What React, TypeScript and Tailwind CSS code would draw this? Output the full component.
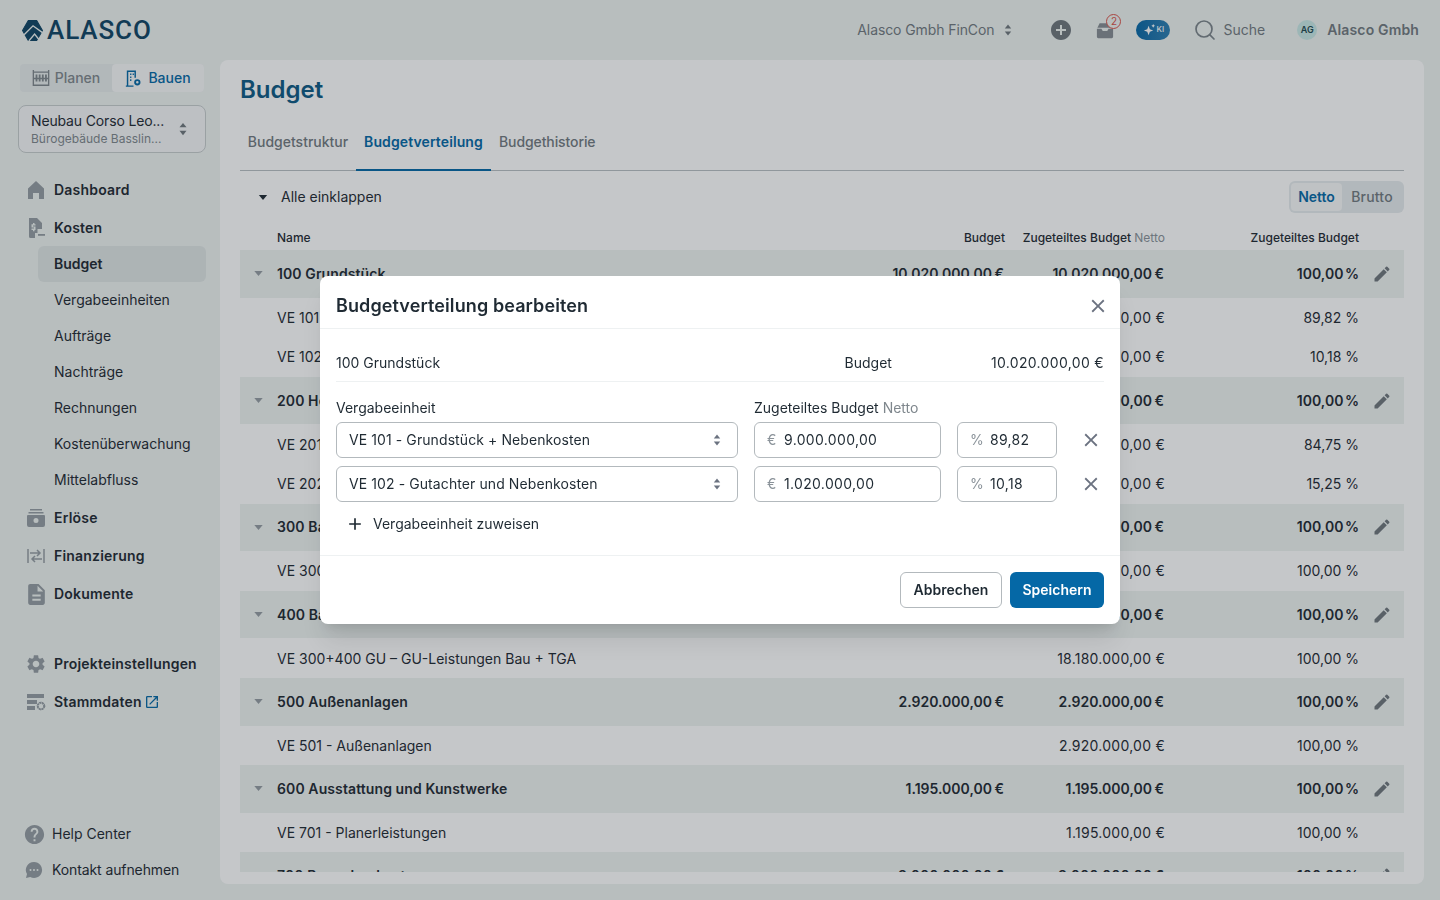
import React from "react";
import { Search } from "lucide-react";
import { MdAdd, MdAddCircle, MdClose, MdDescription, MdEdit, MdHelp, MdOpenInNew, MdSettings } from "react-icons/md";

type Row = {
  name: string;
  budget?: string;
  assigned: string;
  percent: string;
  group?: boolean;
};

const rows: Row[] = [
  { name: "100 Grundstück", budget: "10.020.000,00 €", assigned: "10.020.000,00 €", percent: "100,00 %", group: true },
  { name: "VE 101 - Grundstück + Nebenkosten", assigned: "9.000.000,00 €", percent: "89,82 %" },
  { name: "VE 102 - Gutachter und Nebenkosten", assigned: "1.020.000,00 €", percent: "10,18 %" },
  { name: "200 Herrichten und Erschließen", budget: "1.180.000,00 €", assigned: "1.180.000,00 €", percent: "100,00 %", group: true },
  { name: "VE 201 - Herrichten", assigned: "1.000.000,00 €", percent: "84,75 %" },
  { name: "VE 202 - Erschließung", assigned: "180.000,00 €", percent: "15,25 %" },
  { name: "300 Bauwerk", budget: "14.000.000,00 €", assigned: "14.000.000,00 €", percent: "100,00 %", group: true },
  { name: "VE 300+400 GU", assigned: "14.000.000,00 €", percent: "100,00 %" },
  { name: "400 Bauwerk TGA", budget: "4.180.000,00 €", assigned: "4.180.000,00 €", percent: "100,00 %", group: true },
  { name: "VE 300+400 GU – GU-Leistungen Bau + TGA", assigned: "18.180.000,00 €", percent: "100,00 %" },
  { name: "500 Außenanlagen", budget: "2.920.000,00 €", assigned: "2.920.000,00 €", percent: "100,00 %", group: true },
  { name: "VE 501 - Außenanlagen", assigned: "2.920.000,00 €", percent: "100,00 %" },
  { name: "600 Ausstattung und Kunstwerke", budget: "1.195.000,00 €", assigned: "1.195.000,00 €", percent: "100,00 %", group: true },
  { name: "VE 701 - Planerleistungen", assigned: "1.195.000,00 €", percent: "100,00 %" },
  { name: "700 Baunebenkosten", budget: "3.000.000,00 €", assigned: "3.000.000,00 €", percent: "100,00 %", group: true },
];

const subNav = ["Vergabeeinheiten", "Aufträge", "Nachträge", "Rechnungen", "Kostenüberwachung", "Mittelabfluss"];

const UpDown = ({ className }: { className: string }) => (
  <svg viewBox="0 0 10 16" className={className} fill="currentColor">
    <path d="M5 1 9 6H1Z" />
    <path d="M5 15 1 10h8Z" />
  </svg>
);

const Caret = ({ className }: { className: string }) => (
  <svg viewBox="0 0 10 6" className={className} fill="currentColor">
    <path d="M0 0h10L5 6Z" />
  </svg>
);

const Logo = () => (
  <svg viewBox="0 0 20 20" className="h-[21px] w-[21px]">
    <path d="M6 .5h8l5.500 9.500-5.500 9.500H6L.5 10Z" fill="#0f4565" stroke="#0f4565" strokeLinejoin="round" />
    <path d="M2 14 10.500 5.500l9 6.500M6.500 20l5.500-6.500 4.500 5.500" fill="none" stroke="#eef3f1" strokeWidth="1.300" />
  </svg>
);

const HomeIcon = () => (
  <svg viewBox="0 0 20 20" className="h-5 w-5" fill="currentColor">
    <path d="M10 1 18 8.500V19h-5v-6H7v6H2V8.500Z" />
  </svg>
);

const CostIcon = () => (
  <svg viewBox="0 0 20 20" className="h-5 w-5" fill="currentColor">
    <path d="M3 0h8l5 5v6h-4.500v4H15v0H9v5H4.500A1.500 1.500 0 0 1 3 18.500Z" />
    <path d="M12 16h7v1.800h-7Z" />
    <path d="M7 5v1.200H5.500v3.300H8v1H5.500V12H7v1.200h1.500V12h1V8.500H7v-1h2.500V6.200h-1V5Z" fill="#eef3f1" />
  </svg>
);

const RevenueIcon = () => (
  <svg viewBox="0 0 20 20" className="h-5 w-5" fill="currentColor">
    <path d="M4 1h12v1.500H4ZM2.500 4h15v1.500h-15Z" />
    <path fillRule="evenodd" d="M2 7h16a1 1 0 0 1 1 1v9a2 2 0 0 1-2 2H3a2 2 0 0 1-2-2V8a1 1 0 0 1 1-1Zm8 3a2.500 2.500 0 1 0 0 5 2.500 2.500 0 0 0 0-5Z" />
  </svg>
);

const FinanceIcon = () => (
  <svg viewBox="0 0 20 20" className="h-5 w-5" fill="none" stroke="currentColor" strokeWidth="1.500">
    <path d="M2 3v14M18 3v14M4 7h10M11 4l3 3-3 3M16 13H6M9 10l-3 3 3 3" />
  </svg>
);

const DataIcon = () => (
  <svg viewBox="0 0 20 20" className="h-5 w-5" fill="currentColor">
    <path d="M1 2h17v4H1ZM1 8h10v4H1ZM1 14h8v4H1Z" />
    <circle cx="15" cy="14" r="3.200" fill="none" stroke="currentColor" strokeWidth="2" strokeDasharray="2 .6" />
    <circle cx="15" cy="14" r="3.800" fill="none" stroke="currentColor" strokeWidth="1" strokeDasharray="1.500 1.500" />
  </svg>
);

const ChatIcon = () => (
  <svg viewBox="0 0 20 20" className="h-5 w-5" fill="currentColor">
    <path fillRule="evenodd" d="M10 2a8 8 0 1 1-3.800 15L2 18l1-3.900A8 8 0 0 1 10 2ZM6.500 9a1 1 0 1 0 0 2 1 1 0 0 0 0-2Zm3.500 0a1 1 0 1 0 0 2 1 1 0 0 0 0-2Zm3.500 0a1 1 0 1 0 0 2 1 1 0 0 0 0-2Z" />
  </svg>
);

const AbacusIcon = () => (
  <svg viewBox="0 0 20 20" className="h-[18px] w-[18px]" fill="none" stroke="currentColor" strokeWidth="1.500">
    <path d="M1.500 1v18M18.500 1v18M1.500 3.500h17M1.500 18h17M1.500 10.500h17" />
    <path d="M5 6v8M8.500 6v8M12 6v8M15.500 6v8" strokeWidth="2" />
  </svg>
);

const BuildingIcon = () => (
  <svg viewBox="0 0 20 20" className="h-[17px] w-[17px]" fill="none" stroke="currentColor" strokeWidth="1.700">
    <path d="M1 19h9M3 19V1.500h9V9" />
    <path d="M6 5h1.500M9 5h1.500M6 8.500h1.500M6 12h1.500" strokeWidth="2" />
    <circle cx="14.500" cy="14.500" r="2.600" strokeWidth="2.200" />
  </svg>
);

const InboxIcon = () => (
  <svg viewBox="0 0 20 18" className="h-[17px] w-[18px]" fill="currentColor">
    <path d="M4 1h9l3 5H1.500Z" />
    <path d="M1 7h5l1.500 2.500h5L14 7h5v9a1.500 1.500 0 0 1-1.500 1.500h-15A1.500 1.500 0 0 1 1 16Z" />
  </svg>
);

const Spark = () => (
  <svg viewBox="0 0 14 14" className="h-[13px] w-[13px]" fill="white">
    <path d="M6 2 7.400 5.600 11 7 7.400 8.400 6 12 4.600 8.400 1 7 4.600 5.600Z" />
    <path d="M11 0l.7 1.300L13 2l-1.300.7L11 4l-.7-1.300L9 2l1.300-.7Z" />
  </svg>
);

const NavItem = ({ icon, label, extra }: { icon: React.ReactNode; label: string; extra?: React.ReactNode }) => (
  <div className="flex h-9 items-center gap-2 pl-[26px] text-sm font-semibold tracking-[0.2px] text-[#1f2a33]">
    <span className="flex w-5 shrink-0 justify-center text-[#959da3]">{icon}</span>
    <span>{label}</span>
    {extra}
  </div>
);

const TableRow = ({ row }: { row: Row }) => (
  <div
    className={
      row.group
        ? "grid h-[47.6px] shrink-0 grid-cols-[37px_1fr_200px_160px_194px_45px] items-center bg-[#eef3f1] text-sm font-semibold text-[#1f2a33]"
        : "grid h-[39.6px] shrink-0 grid-cols-[37px_1fr_200px_160px_194px_45px] items-center pt-[1px] text-sm text-[#1f2a33]"
    }
  >
    <span className="flex justify-center text-[#959da3]">{row.group && <Caret className="h-[5px] w-[9px]" />}</span>
    <span className={row.group ? "truncate tracking-[0.1px]" : "truncate"}>{row.name}</span>
    <span className="pr-[1px] text-right [word-spacing:-1px]">{row.budget}</span>
    {row.group ? (
      <span className="pr-[1px] text-right [word-spacing:-1px]">{row.assigned}</span>
    ) : (
      <span className="text-right tracking-[0.25px]">{row.assigned}</span>
    )}
    {row.group ? (
      <span className="text-right [word-spacing:-2px]">{row.percent}</span>
    ) : (
      <span className="text-right">{row.percent}</span>
    )}
    <span className="flex justify-center pl-[1px] text-[#6f777d]">{row.group && <MdEdit className="h-[20px] w-[20px]" />}</span>
  </div>
);

const AssignRow = ({ unit, amount, percent }: { unit: string; amount: string; percent: string }) => (
  <div className="flex h-9 items-center text-sm">
    <div className="flex h-9 w-[402px] items-center justify-between rounded-md border border-[#b3b9bd] pl-3 pr-4 text-[#1f2a33]">
      <span className="tracking-[0.09px]">{unit}</span>
      <UpDown className="h-[14px] w-2 text-[#6b7280]" />
    </div>
    <div className="ml-4 flex h-9 w-[187px] items-center rounded-md border border-[#b3b9bd] pl-3 text-[#1f2a33]">
      <span className="w-[17px] text-[#8a9299]">€</span>
      <span className="tracking-[0.33px]">{amount}</span>
    </div>
    <div className="ml-4 flex h-9 w-[100px] items-center rounded-md border border-[#b3b9bd] pl-3 text-[#1f2a33]">
      <span className="w-5 text-[#8a9299]">%</span>
      <span className="tracking-[0.3px]">{percent}</span>
    </div>
    <MdClose className="ml-[23px] h-[22px] w-[22px] text-[#6b7280]" />
  </div>
);

export default function App() {
  return (
    <div className="flex h-screen w-full flex-col overflow-hidden bg-[#eef3f1] [font-family:Inter,sans-serif]">
      {/* top bar */}
      <header className="flex h-[60px] shrink-0 items-center pl-[22px] pr-[21px]">
        <Logo />
        <span className="ml-[4px] text-[26px] font-medium leading-none tracking-[0.9px] text-[#0f4565] [font-family:Roboto,sans-serif]">ALASCO</span>
        <div className="flex-1" />
        <span className="text-sm tracking-[-0.1px] text-[#727a80]">Alasco Gmbh FinCon</span>
        <UpDown className="ml-[10px] h-[14px] w-2 text-[#6f777d]" />
        <MdAddCircle className="ml-[37px] h-6 w-6 text-[#6f777d]" />
        <div className="relative ml-[23px] text-[#868d93]">
          <InboxIcon />
          <span className="absolute -right-[7px] -top-[8px] flex h-[15px] w-[15px] items-center justify-center rounded-full border border-[#d9534a] bg-[#eef3f1] text-[10px] leading-none text-[#d9534a]">2</span>
        </div>
        <div className="ml-[22px] flex h-5 w-[34px] items-center justify-center gap-[1px] rounded-full bg-gradient-to-r from-[#0568a6] to-[#2c7fb3]">
          <Spark />
          <span className="-mt-[3px] text-[8px] font-medium text-white">KI</span>
        </div>
        <Search className="ml-[23px] h-[24px] w-[24px] text-[#7b848a]" strokeWidth={1.7} />
        <span className="ml-[6px] text-sm text-[#727a80]">Suche</span>
        <span className="ml-[32px] flex h-[20px] w-[20px] items-center justify-center rounded-full bg-[#c9e8e6] text-[9px] font-semibold text-[#1f4a50]">AG</span>
        <span className="ml-[10px] text-sm font-semibold tracking-[0.15px] text-[#727a80]">Alasco Gmbh</span>
      </header>

      <div className="flex min-h-0 flex-1 pr-4">
        {/* sidebar */}
        <aside className="flex w-[220px] shrink-0 flex-col pb-[12px]">
          <div className="ml-5 mt-1 flex h-7 w-[184px] rounded-[4px] bg-[#e6ebeb] text-sm font-medium">
            <div className="flex w-[92px] items-center justify-center gap-[5px] text-[#7f878d]">
              <AbacusIcon />
              Planen
            </div>
            <div className="flex flex-1 items-center justify-center gap-[6px] rounded-[4px] bg-[#f7f8f9] text-[#0568a6]">
              <BuildingIcon />
              Bauen
            </div>
          </div>

          <div className="ml-[18px] mt-[13px] flex h-12 w-[188px] items-center justify-between rounded-lg border border-[#c6cccd] bg-[#f4f6f7] pl-3 pr-[17px]">
            <div>
              <div className="text-sm leading-[18px] tracking-[-0.15px] text-[#1f2a33]">Neubau Corso Leo...</div>
              <div className="mt-[1px] text-xs leading-4 text-[#7f878d]">Bürogebäude Basslin...</div>
            </div>
            <UpDown className="h-[14px] w-[10px] text-[#6f777d]" />
          </div>

          <nav className="mt-[19px] flex flex-col">
            <div className="flex flex-col gap-[2px]">
              <NavItem icon={<HomeIcon />} label="Dashboard" />
              <NavItem icon={<CostIcon />} label="Kosten" />
            </div>
            <div className="ml-[38px] flex h-9 w-[168px] items-center rounded-md bg-[#dfe6e5] pl-4 text-sm font-semibold text-[#1f2a33]">Budget</div>
            {subNav.map((item) => (
              <div key={item} className="flex h-9 items-center pl-[54px] text-sm text-[#1f2a33]">
                {item}
              </div>
            ))}
            <div className="mt-[2px] flex flex-col gap-[2px]">
              <NavItem icon={<RevenueIcon />} label="Erlöse" />
              <NavItem icon={<FinanceIcon />} label="Finanzierung" />
              <NavItem icon={<MdDescription className="h-[25px] w-[25px] shrink-0" />} label="Dokumente" />
            </div>
            <div className="mt-[34px] flex flex-col gap-[2px]">
              <NavItem icon={<MdSettings className="h-[22px] w-[22px] shrink-0" />} label="Projekteinstellungen" />
              <NavItem icon={<DataIcon />} label="Stammdaten" extra={<MdOpenInNew className="-ml-[6px] h-[16px] w-[16px] text-[#0568a6]" />} />
            </div>
          </nav>

          <div className="mt-auto flex flex-col text-sm text-[#1f2a33]">
            <div className="flex h-9 items-center gap-[6px] pl-[24px]">
              <MdHelp className="-ml-[1px] h-[23px] w-[23px] text-[#959da3]" />
              Help Center
            </div>
            <div className="flex h-9 items-center gap-[8px] pl-[24px]">
              <span className="text-[#959da3]"><ChatIcon /></span>
              <span className="tracking-[-0.1px]">Kontakt aufnehmen</span>
            </div>
          </div>
        </aside>

        {/* main card */}
        <main className="mb-4 flex min-w-0 flex-1 flex-col rounded-lg bg-white px-5 pb-3">
          <h1 className="mt-[14px] text-2xl font-semibold leading-8 text-[#0e5a85]">Budget</h1>

          <div className="mt-[12px] flex h-[53px] shrink-0 items-stretch border-b border-[#b9bfc3] text-sm font-medium">
            <div className="flex w-[116px] items-center justify-center pb-1 text-[#727a80]">Budgetstruktur</div>
            <div className="-mb-[1px] flex w-[135px] items-center justify-center border-b-2 border-[#0568a6] pb-[3px] font-semibold tracking-[0.1px] text-[#0568a6]">Budgetverteilung</div>
            <div className="flex items-center px-2 pb-1 tracking-[-0.1px] text-[#727a80]">Budgethistorie</div>
          </div>

          <div className="mt-[10px] flex h-8 shrink-0 items-center justify-between">
            <div className="flex items-center text-sm text-[#1f2a33]">
              <Caret className="ml-[18px] h-[5px] w-[10px] text-[#1f2a33]" />
              <span className="ml-[13px]">Alle einklappen</span>
            </div>
            <div className="flex h-8 w-[115px] items-center rounded-md bg-[#e6ebee] p-[2px] text-sm font-semibold">
              <div className="flex h-7 w-[51px] items-center justify-center rounded bg-[#f7f8f9] text-[#0568a6]">Netto</div>
              <div className="flex-1 text-center font-medium tracking-[0.2px] text-[#727a80]">Brutto</div>
            </div>
          </div>

          <div className="mt-[9px] grid h-[28px] shrink-0 grid-cols-[37px_1fr_200px_160px_194px_45px] items-center pt-1 text-xs font-medium text-[#1f2a33]">
            <span />
            <span>Name</span>
            <span className="text-right">Budget</span>
            <span className="text-right">
              Zugeteiltes Budget <span className="font-normal text-[#8a9299]">Netto</span>
            </span>
            <span className="text-right">Zugeteiltes Budget</span>
            <span />
          </div>

          <div className="flex min-h-0 flex-1 flex-col overflow-hidden">
            {rows.map((row) => (
              <TableRow key={row.name} row={row} />
            ))}
          </div>
        </main>
      </div>

      {/* dialog over a dimmed page */}
      <div className="fixed inset-0 flex items-center justify-center bg-[rgba(22,30,38,0.25)]">
        <div className="w-[800px] rounded-lg bg-white shadow-xl">
          <div className="flex h-[53px] items-center justify-between border-b border-[#eef1f2] pl-4 pr-[11px] pt-2">
            <h2 className="text-lg font-semibold tracking-[0.1px] text-[#1f2a33]">Budgetverteilung bearbeiten</h2>
            <MdClose className="h-[22px] w-[22px] text-[#6b7280]" />
          </div>

          <div className="px-4">
            <div className="mt-[15px] flex h-[38px] items-center border-b border-[#eef1f2] text-sm text-[#1f2a33]">
              <span className="flex-1">100 Grundstück</span>
              <span>Budget</span>
              <span className="ml-[99px] tracking-[0.33px]">10.020.000,00 €</span>
            </div>

            <div className="mt-[16px] flex h-[20px] items-center text-sm text-[#1f2a33]">
              <span className="w-[418px]">Vergabeeinheit</span>
              <span>
                Zugeteiltes Budget <span className="text-[#7f878d]">Netto</span>
              </span>
            </div>

            <div className="mt-[4px] flex flex-col gap-2">
              <AssignRow unit="VE 101 - Grundstück + Nebenkosten" amount="9.000.000,00" percent="89,82" />
              <AssignRow unit="VE 102 - Gutachter und Nebenkosten" amount="1.020.000,00" percent="10,18" />
            </div>

            <div className="mt-2 flex h-7 items-center pl-[9px] text-sm text-[#1f2a33]">
              <MdAdd className="h-[20px] w-[20px]" />
              <span className="ml-2">Vergabeeinheit zuweisen</span>
            </div>
          </div>

          <div className="mt-[17px] flex h-[69px] items-center justify-end gap-2 border-t border-[#eef1f2] px-4">
            <div className="flex h-9 w-[102px] items-center justify-center rounded-md border border-[#b3b9bd] text-sm font-semibold text-[#1f2a33]">Abbrechen</div>
            <div className="flex h-9 w-[94px] items-center justify-center rounded-md bg-[#0568a6] text-sm font-semibold text-white">Speichern</div>
          </div>
        </div>
      </div>
    </div>
  );
}
